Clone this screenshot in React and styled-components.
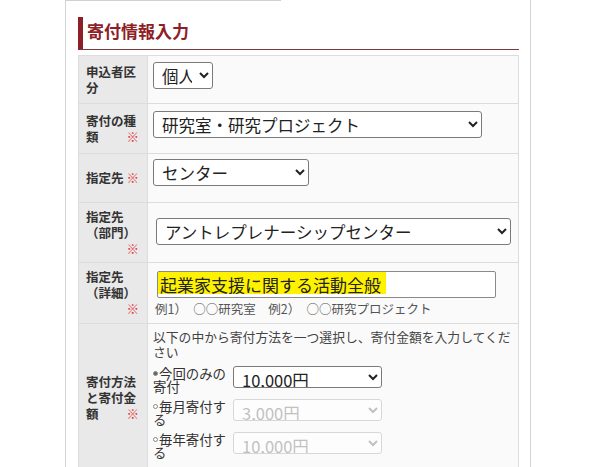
import React from 'react';
import styled, { createGlobalStyle } from 'styled-components';

const GlobalStyle = createGlobalStyle`
  body {
    margin: 0;
    background: #fff;
    font-family: "Noto Sans CJK JP", "Noto Sans", sans-serif;
  }
`;

const Page = styled.div`
  padding-left: 65px;
`;

const Panel = styled.div`
  width: 441px;
  min-height: 467px;
  padding: 0 11px 0 12px;
  border-left: 1px solid #d4d4d4;
  border-right: 1px solid #d4d4d4;
`;

const TopRule = styled.div`
  width: 215px;
  height: 1px;
  margin-left: -12px;
  background: #d0d0d0;
`;

const SectionTitle = styled.h2`
  margin: 16px 0 5px;
  height: 32px;
  padding-left: 4px;
  border-left: 5px solid #8e1f27;
  border-bottom: 1px solid #7d3b3e;
  font-size: 17px;
  font-weight: 700;
  line-height: 28px;
  color: #8e1f27;
`;

const FormTable = styled.div`
  border: 1px solid #dcdcdc;
  border-bottom: none;
`;

const Row = styled.div`
  display: grid;
  grid-template-columns: 68px 1fr;
  min-height: ${p => p.$h}px;
  border-bottom: 1px solid #dcdcdc;
`;

const LabelCell = styled.div`
  display: flex;
  align-items: center;
  padding: 0 8px 0 7px;
  background: #e9e9e9;
`;

const LabelText = styled.div`
  display: flow-root;
  width: 100%;
  font-size: 12.5px;
  font-weight: 700;
  line-height: 16px;
  color: #333;
`;

const Mark = styled.span`
  float: right;
  font-weight: 400;
  color: #e2383e;
`;

const ValueCell = styled.div`
  border-left: 1px solid #dcdcdc;
  background: #fafafa;
  padding: ${p => p.$top ?? 6}px 6px 6px ${p => p.$left ?? 5}px;
`;

const Select = styled.select`
  display: block;
  width: ${p => p.$w}px;
  height: ${p => p.$hh || 27}px;
  padding: 0 4px 0 4px;
  font-family: inherit;
  font-size: 16.5px;
  color: #222;
  background: #fff;
  border: 1px solid #7a7a7a;
  border-radius: 3px;
  &:disabled {
    color: #a9a9a9;
    border-color: #c9c9c9;
    background: #fff;
  }
`;

const TextInput = styled.input`
  display: block;
  box-sizing: border-box;
  width: 339px;
  height: 27px;
  padding: 0 2px;
  font-family: inherit;
  font-size: 17px;
  color: #222;
  border: 1px solid #8a8a8a;
  border-radius: 2px;
  background: linear-gradient(#fff200, #fff200) no-repeat 0 0 / 228px 22px, #fff;
`;

const Hint = styled.div`
  margin: 3px 0 0 -2px;
  font-size: 12.5px;
  line-height: 16px;
  color: #555;
  white-space: nowrap;
`;

const Lead = styled.p`
  margin: 0;
  font-size: 12.8px;
  line-height: 15px;
  color: #444;
`;

const RadioList = styled.div`
  margin-top: 7px;
  display: flex;
  flex-direction: column;
`;

const RadioRow = styled.label`
  display: flex;
  align-items: flex-start;
  height: 33px;
`;

const RadioLabel = styled.span`
  width: 80px;
  padding-top: 1px;
  font-size: 13.4px;
  line-height: 13px;
  color: #333;
`;

const Dot = styled.span`
  display: inline-block;
  box-sizing: border-box;
  width: 5px;
  height: 5px;
  margin-right: 1px;
  vertical-align: 3px;
  border: 1px solid #888;
  border-radius: 50%;
  background: ${p => (p.$on ? '#666' : '#fff')};
`;

const methods = [
  { label: '今回のみの寄付', value: '10,000円', on: true },
  { label: '毎月寄付する', value: '3,000円' },
  { label: '毎年寄付する', value: '10,000円' },
];

export default function App() {
  return (
    <Page>
      <GlobalStyle />
      <Panel>
        <TopRule />
        <SectionTitle>寄付情報入力</SectionTitle>
        <FormTable>
          <Row $h={47}>
            <LabelCell><LabelText>申込者区分</LabelText></LabelCell>
            <ValueCell $top={6}>
              <Select $w={60} defaultValue="個人"><option>個人</option><option>法人</option></Select>
            </ValueCell>
          </Row>
          <Row $h={49}>
            <LabelCell><LabelText>寄付の種類<Mark>※</Mark></LabelText></LabelCell>
            <ValueCell $top={7}>
              <Select $w={329}><option>研究室・研究プロジェクト</option></Select>
            </ValueCell>
          </Row>
          <Row $h={48}>
            <LabelCell><LabelText>指定先<Mark>※</Mark></LabelText></LabelCell>
            <ValueCell $top={5}>
              <Select $w={156}><option>センター</option></Select>
            </ValueCell>
          </Row>
          <Row $h={59}>
            <LabelCell><LabelText>指定先<br />（部門）<Mark>※</Mark></LabelText></LabelCell>
            <ValueCell $top={15} $left={8}>
              <Select $w={355}><option>アントレプレナーシップセンター</option></Select>
            </ValueCell>
          </Row>
          <Row $h={60}>
            <LabelCell><LabelText>指定先<br />（詳細）<Mark>※</Mark></LabelText></LabelCell>
            <ValueCell $top={8} $left={9}>
              <TextInput defaultValue="起業家支援に関する活動全般" />
              <Hint>例1）　○○研究室　例2）　○○研究プロジェクト</Hint>
            </ValueCell>
          </Row>
          <Row $h={148}>
            <LabelCell><LabelText>寄付方法と寄付金額<Mark>※</Mark></LabelText></LabelCell>
            <ValueCell $top={5}>
              <Lead>以下の中から寄付方法を一つ選択し、寄付金額を入力してください</Lead>
              <RadioList>
                {methods.map(m => (
                  <RadioRow key={m.label}>
                    <RadioLabel><Dot $on={m.on} />{m.label}</RadioLabel>
                    <Select $w={149} $hh={22} disabled={!m.on}><option>{m.value}</option></Select>
                  </RadioRow>
                ))}
              </RadioList>
            </ValueCell>
          </Row>
        </FormTable>
      </Panel>
    </Page>
  );
}
